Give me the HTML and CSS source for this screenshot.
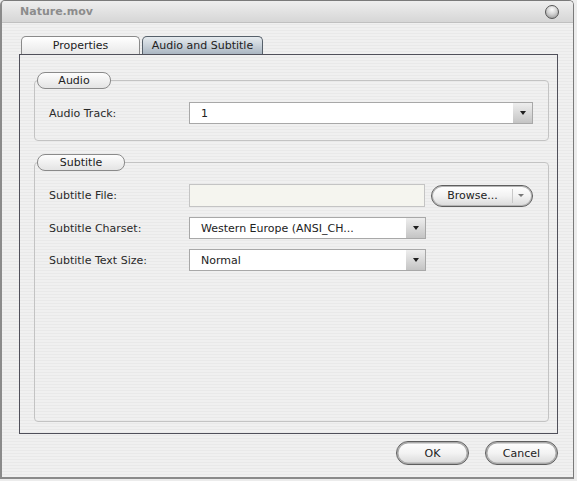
FILE: index.html
```html
<!DOCTYPE html>
<html>
<head>
<meta charset="utf-8">
<title>Nature.mov</title>
<link rel="stylesheet" href="styles.css">
</head>
<body>
<div class="window">
  <div class="titlebar">
    <span class="title">Nature.mov</span>
    <span class="close"></span>
  </div>
  <div class="content">
    <div class="tabs">
      <div class="tab">Properties</div>
      <div class="tab active">Audio and Subtitle</div>
    </div>
    <div class="panel">
      <fieldset class="group audio">
        <legend class="legend"><span class="legend-text">Audio</span></legend>
        <div class="rows">
          <div class="row">
            <span class="label">Audio Track:</span>
            <div class="combo wide"><span class="value">1</span><span class="arrow"></span></div>
          </div>
        </div>
      </fieldset>
      <fieldset class="group subtitle">
        <legend class="legend"><span class="legend-text">Subtitle</span></legend>
        <div class="rows">
          <div class="row file-row">
            <span class="label">Subtitle File:</span>
            <div class="filebox"></div>
            <div class="browse"><span class="browse-text">Browse...</span><span class="browse-arrow"></span></div>
          </div>
          <div class="row">
            <span class="label">Subtitle Charset:</span>
            <div class="combo mid"><span class="value">Western Europe (ANSI_CH...</span><span class="arrow"></span></div>
          </div>
          <div class="row">
            <span class="label">Subtitle Text Size:</span>
            <div class="combo mid"><span class="value">Normal</span><span class="arrow"></span></div>
          </div>
        </div>
      </fieldset>
    </div>
    <div class="buttons">
      <button class="btn">OK</button>
      <button class="btn">Cancel</button>
    </div>
  </div>
</div>
</body>
</html>
```

FILE: styles.css
```css
body {
  margin: 0;
  background: #ececec;
  font-family: "DejaVu Sans", sans-serif;
  font-size: 11px;
  color: #222;
}

.window {
  box-sizing: border-box;
  width: 574px;
  height: 479px;
  border: 1px solid #7a7a7a;
  border-left: 2px solid #8a8a8a;
  border-bottom: 2px solid #8a8a8a;
  border-radius: 5px 5px 0 0;
  background: repeating-linear-gradient(to bottom, #f0f0f0 0 2px, #e9e9e9 2px 3px);
  overflow: hidden;
}

.titlebar {
  box-sizing: border-box;
  height: 22px;
  display: flex;
  align-items: center;
  justify-content: space-between;
  padding: 0 14px 0 18px;
  background: linear-gradient(#eeeeee, #d6d6d6);
  border-bottom: 1px solid #c0c0c0;
}

.title {
  font-weight: bold;
  color: #8c8c8c;
}

.close {
  box-sizing: border-box;
  width: 14px;
  height: 14px;
  border-radius: 50%;
  border: 1px solid #555;
  background: radial-gradient(circle at 50% 30%, #fbfbfb 0, #d4d4d4 45%, #8a8a8a 100%);
}

.content {
  padding: 13px 0 0 17px;
}

.tabs {
  display: flex;
  gap: 2px;
  margin-left: 2px;
  height: 18px;
}

.tab {
  box-sizing: border-box;
  width: 119px;
  height: 18px;
  border: 1px solid #8a8a8a;
  border-bottom: none;
  border-radius: 5px 5px 0 0;
  background: linear-gradient(#ffffff, #e8e8e8);
  text-align: center;
  line-height: 17px;
}

.tab.active {
  width: 121px;
  border-color: #56606a;
  background: linear-gradient(#e6ebef, #aab6c2);
}

.panel {
  box-sizing: border-box;
  width: 539px;
  height: 380px;
  border: 1px solid #50505a;
  padding: 17px 8px 11px 14px;
  display: flex;
  flex-direction: column;
}

.group {
  margin: 0;
  padding: 0;
  min-width: 0;
  border: 1px solid #c3c3c3;
  border-radius: 4px;
}

.legend {
  box-sizing: border-box;
  height: 17px;
  margin-left: 2px;
  padding: 0;
  border: 1px solid #8a8a8a;
  border-radius: 8px;
  background: linear-gradient(#fdfdfd, #e4e4e4);
  text-align: left;
  line-height: 15px;
}

.legend-text {
  display: block;
  text-align: center;
}

.audio .legend { width: 74px; }
.subtitle .legend { width: 88px; }

.subtitle {
  margin-top: 13px;
  flex: 1;
}

.rows {
  display: flex;
  flex-direction: column;
  gap: 10px;
  padding: 13px 15px 0 14px;
}

.audio .rows { padding-bottom: 16px; }

.row {
  display: flex;
  align-items: center;
  height: 22px;
}

.file-row { height: 23px; }

.label {
  flex: none;
  width: 140px;
  color: #2a2a2a;
}

.combo {
  box-sizing: border-box;
  height: 22px;
  border: 1px solid #a8a8a8;
  background: #fff;
  display: flex;
  align-items: center;
}

.combo.wide { flex: 1; }
.combo.mid { width: 237px; }

.value {
  flex: 1;
  padding-left: 11px;
  white-space: nowrap;
}

.arrow {
  flex: none;
  width: 19px;
  height: 20px;
  background: linear-gradient(#eeeeee, #c4c4c4);
  display: flex;
  align-items: center;
  justify-content: center;
}

.arrow::after {
  content: "";
  border-left: 3.5px solid transparent;
  border-right: 3.5px solid transparent;
  border-top: 4px solid #1e1e1e;
}

.filebox {
  box-sizing: border-box;
  width: 236px;
  height: 23px;
  border: 1px solid #c4c4c4;
  background: #f5f5ef;
}

.browse {
  box-sizing: border-box;
  margin-left: 6px;
  width: 102px;
  height: 22px;
  border: 1px solid #5e5e5e;
  border-radius: 11px;
  box-shadow: inset 0 0 0 1px #b4b4b4;
  background: linear-gradient(#ffffff, #f2f2f2 50%, #dadada);
  display: flex;
  align-items: center;
}

.browse-text {
  width: 79px;
  padding-left: 1px;
  text-align: center;
  border-right: 1px solid #c8c8c8;
  line-height: 14px;
}

.browse-arrow {
  flex: 1;
  display: flex;
  justify-content: center;
  padding-right: 3px;
}

.browse-arrow::after {
  content: "";
  border-left: 3px solid transparent;
  border-right: 3px solid transparent;
  border-top: 3px solid #777;
}

.buttons {
  width: 539px;
  margin-top: 7px;
  display: flex;
  justify-content: flex-end;
  gap: 16px;
}

.btn {
  box-sizing: border-box;
  width: 73px;
  height: 24px;
  padding: 0;
  border: 1px solid #5e5e5e;
  border-radius: 12px;
  box-shadow: inset 0 0 0 1.5px #ababab;
  background: linear-gradient(#ffffff, #f3f3f3 50%, #d9d9d9);
  font: inherit;
  color: #222;
  text-align: center;
}
```
